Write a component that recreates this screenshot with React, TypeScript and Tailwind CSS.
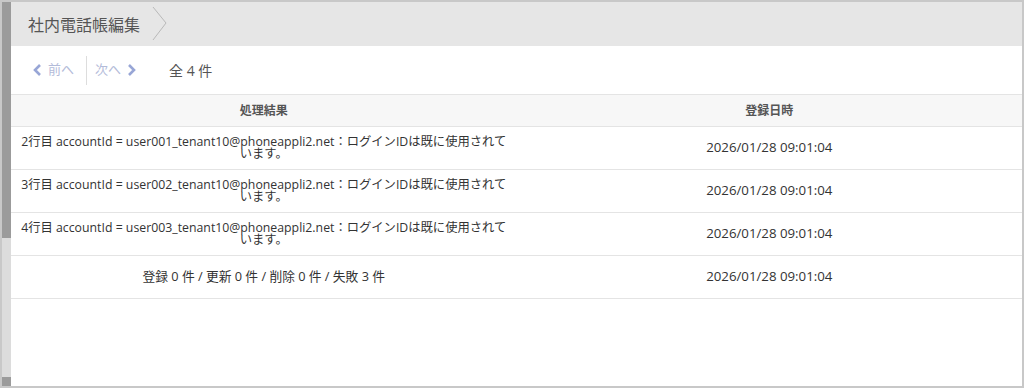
const font = { fontFamily: '"Open Sans", "Noto Sans CJK JP", sans-serif' };

const results = [
  { line: "2行目 accountId = user001_tenant10@phoneappli2.net：ログインIDは既に使用されて", date: "2026/01/28 09:01:04" },
  { line: "3行目 accountId = user002_tenant10@phoneappli2.net：ログインIDは既に使用されて", date: "2026/01/28 09:01:04" },
  { line: "4行目 accountId = user003_tenant10@phoneappli2.net：ログインIDは既に使用されて", date: "2026/01/28 09:01:04" },
];

function ScrollStrip() {
  return (
    <div className="w-[9px] flex flex-col shrink-0">
      <div className="h-[236px] bg-[#9b9b9b]" />
      <div className="flex-1 bg-[#dcdcdc]" />
      <div className="h-[9px] bg-[#9b9b9b]" />
    </div>
  );
}

function TitleBar() {
  return (
    <div className="h-[44px] bg-[#e6e6e6] flex items-center pl-[17px]">
      <span className="text-[16px] leading-none text-[#555] pt-[2px]">社内電話帳編集</span>
      <svg width="16" height="36" viewBox="0 0 16 36" className="ml-[12px]">
        <polyline points="1,1 14,17 1,34" fill="none" stroke="#b9b9b9" strokeWidth="1" />
      </svg>
    </div>
  );
}

function Pager() {
  return (
    <div className="h-[48px] flex items-center pl-[21px] text-[13px]">
      <span className="flex items-center gap-[6px] text-[#b3bbd9]">
        <svg width="10" height="14" viewBox="0 0 10 14">
          <polyline points="8,2 3,7 8,12" fill="none" stroke="#98a6d6" strokeWidth="2.6" />
        </svg>
        前へ
      </span>
      <div className="w-px h-[29px] bg-[#dddddd] ml-[12px] mr-[8px]" />
      <span className="flex items-center gap-[6px] text-[#b3bbd9]">
        次へ
        <svg width="10" height="14" viewBox="0 0 10 14">
          <polyline points="2,2 7,7 2,12" fill="none" stroke="#98a6d6" strokeWidth="2.6" />
        </svg>
      </span>
      <span className="ml-[32px] text-[14px] text-[#555]">全 4 件</span>
    </div>
  );
}

function ResultTable() {
  return (
    <div className="border-t border-[#e4e4e4]">
      <div className="grid grid-cols-2 h-[32px] bg-[#f7f7f7] border-b border-[#e4e4e4] text-[12px] font-semibold text-[#555]">
        <div className="flex items-center justify-center">処理結果</div>
        <div className="flex items-center justify-center">登録日時</div>
      </div>
      {results.map((r, i) => (
        <div key={i} className="grid grid-cols-2 h-[43px] border-b border-[#e4e4e4] text-[#333]">
          <div className="flex flex-col items-center justify-center text-[12.3px] leading-[12px] text-center">
            <span className="whitespace-nowrap">{r.line}</span>
            <span>います。</span>
          </div>
          <div className="flex items-center justify-center text-[13.25px]">{r.date}</div>
        </div>
      ))}
      <div className="grid grid-cols-2 h-[43px] border-b border-[#e4e4e4] text-[#333]">
        <div className="flex items-center justify-center text-[12.75px]">登録 0 件 / 更新 0 件 / 削除 0 件 / 失敗 3 件</div>
        <div className="flex items-center justify-center text-[13.25px]">2026/01/28 09:01:04</div>
      </div>
    </div>
  );
}

export default function App() {
  return (
    <div className="w-[1024px] h-[388px] bg-white border-2 border-[#c8c8c8] flex overflow-hidden" style={font}>
      <ScrollStrip />
      <div className="flex-1 flex flex-col">
        <TitleBar />
        <Pager />
        <ResultTable />
      </div>
    </div>
  );
}
